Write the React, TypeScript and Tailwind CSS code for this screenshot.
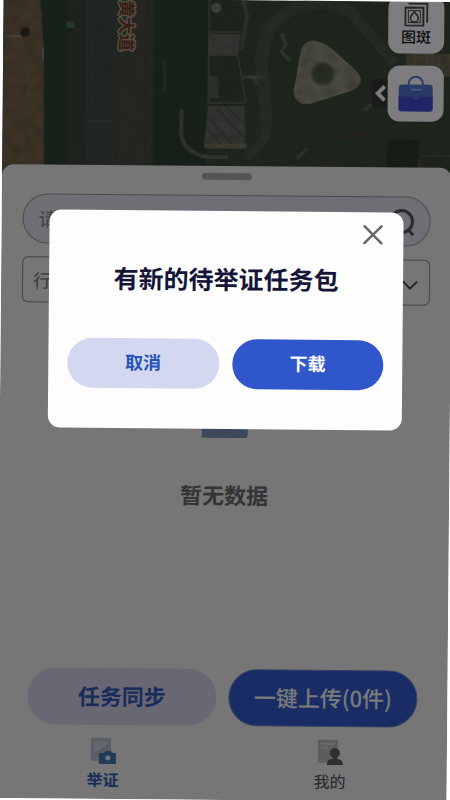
import React from "react";

function SatelliteMap() {
  const patches = [
    [12, 20], [30, 52], [22, 90], [34, 130], [16, 150], [40, 15],
  ];
  return (
    <svg className="block h-[182px] w-full" viewBox="0 0 450 182" preserveAspectRatio="xMidYMid slice" role="img" aria-label="卫星地图">
      <defs>
        <filter id="terrain" x="0" y="0" width="100%" height="100%" colorInterpolationFilters="sRGB">
          <feTurbulence type="fractalNoise" baseFrequency="0.09" numOctaves="4" seed="8" />
          <feColorMatrix values="0 0 0 0 0.2  0 0 0 0 0.25  0 0 0 0 0.18  1.8 0 0 0 -0.6" />
        </filter>
        <filter id="soften" colorInterpolationFilters="sRGB"><feGaussianBlur stdDeviation="0.7" /></filter>
      </defs>
      <rect width="450" height="182" fill="#3b4b3b" />
      <g filter="url(#soften)">
        <path d="M0 0H36L41 50L42 182H0Z" fill="#7a654d" />
        {patches.map(([x, y]) => <circle key={x + y} cx={x} cy={y} r="4" fill="#735f49" />)}
        <circle cx="22" cy="34" r="5" fill="#37342c" />
        <path d="M3 38H18M40 50V60" stroke="#8f8470" strokeWidth="2" />
        <path d="M38 0H68V182H42L41 50Z" fill="#2f4334" />
        <rect x="66" width="17" height="182" fill="#3e453b" />
        <rect x="83" width="32" height="182" fill="#434a48" />
        <path d="M84 0V182M90 0V182" stroke="#4c584b" />
        <path d="M114 0V182" stroke="#3f5236" strokeWidth="2" />
        <rect x="116" width="26" height="182" fill="#4d4d46" />
        <path d="M140 0V182M148 0V182" stroke="#544b3e" strokeWidth="2" />
        <rect x="143" width="4" height="182" fill="#484a41" />
        <rect x="151" width="53" height="182" fill="#2e4133" />
        <path d="M162 60V92" stroke="#3d5233" strokeWidth="4" />
        <path d="M63 26H71" stroke="#547866" strokeWidth="6" />
        <path d="M82 122H110" stroke="#565d52" strokeWidth="2" />
        <path d="M179 110V136Q183 153 204 157H226" fill="none" stroke="#62665b" strokeWidth="4" />
        <path d="M204 0H244L235 54L244 102L244 148H205Z" fill="#3a4938" />
        <g fill="#666963">
          <path d="M206 34H238L235 54H206Z" />
          <path d="M206 106H242L243 144H202Z" />
        </g>
        <path d="M240 0L244 16L238 50" fill="none" stroke="#5f6157" strokeWidth="4" />
        <path d="M206 0V56V104M235 56L243 102M206 32H238M206 55H235M207 103H243" fill="none" stroke="#7a7d73" />
        <path d="M202 146H244" stroke="#7d7a64" strokeWidth="5" />
        <circle cx="213" cy="8" r="5" fill="#858780" />
        <path d="M206 76H216V98H206Z" fill="#5c6256" />
        <path d="M206 118L230 144M206 130L218 144M214 108L241 136M225 107L242 124" stroke="#555852" strokeWidth="2" />
        <path d="M243 157C265 144 265 130 263 104C258 65 254 42 273 19C295 -1 329 -4 350 12L392 62" fill="none" stroke="#4b554b" strokeWidth="9" />
        <path d="M248 157C270 142 270 130 268 104C263 65 259 45 278 22C297 5 329 2 348 18L388 64M240 148C256 140 259 128 258 104C251 65 249 40 268 16" fill="none" stroke="#586253" />
        <path d="M278 33L283 44L278 51L287 60" fill="none" stroke="#6a6b5e" strokeWidth="3" />
        <path d="M238 77H262M252 77V83H256" stroke="#6a6c5f" strokeWidth="3" fill="none" />
        <path d="M313 41C304 39 299 45 298 52L292 88C290 100 298 105 309 102L346 90C359 86 361 77 351 68L327 47C321 43 318 42 313 41Z" fill="#96937f" stroke="#a5a290" />
        <path d="M312 48C307 47 305 50 304 54L298 88C297 95 300 97 307 96" fill="none" stroke="#858472" />
        <circle cx="320" cy="73" r="11" fill="#525b4b" stroke="#717464" strokeWidth="2" />
        <path d="M403 52H450V75H403Z" fill="#706a52" />
        <path d="M412 52V75M424 52V75M436 52V75" stroke="#858068" />
        <rect x="385" y="138" width="32" height="44" fill="#2f392f" />
        <path d="M417 172V159Q417 154 422 154H450" fill="#3e4637" stroke="#5e6657" />
        <path d="M362 109L370 102M295 158L305 148" stroke="#62695a" strokeWidth="3" />
        <path d="M330 140C345 130 365 138 381 128M310 168L330 160" stroke="#454739" strokeWidth="6" fill="none" />
      </g>
      <rect width="450" height="182" filter="url(#terrain)" opacity="0.3" />
      <text transform="translate(117 1) rotate(90)" fontSize="17" fontWeight="700" fill="#6e3a28" stroke="#a99e8b" strokeWidth="3" paintOrder="stroke" strokeLinejoin="round">黄大道</text>
    </svg>
  );
}

function PlotIcon() {
  return (
    <svg className="h-6 w-6" viewBox="0 0 24 24" fill="none" stroke="#4a4a50" strokeWidth="2" aria-hidden="true">
      <path d="M1 5H19V23H1ZM4 1H23V20" />
      <rect x="4" y="8" width="12" height="12" strokeWidth="1" />
      <path d="M10 9C8 12 6 13 6 15.500A4 4 0 0 0 14 15.500C14 13 12 12 10 9Z" strokeWidth="1.600" />
    </svg>
  );
}

function BagIcon() {
  return (
    <svg className="h-9 w-9" viewBox="0 0 36 36" fill="none" aria-hidden="true">
      <path d="M11 11V8A7 7 0 0 1 25 8V11" stroke="#5579d0" strokeWidth="2" />
      <rect x="1" y="9" width="34" height="27" rx="3" fill="#5075cf" />
      <path d="M1 21H35V33Q35 36 32 36H4Q1 36 1 33Z" fill="#434bd0" />
      <path d="M13 14H24" stroke="#a3b9ed" strokeWidth="1.500" />
      <path d="M14 21H22L18 25Z" fill="#5075cf" />
    </svg>
  );
}

function EvidenceIcon() {
  return (
    <svg className="h-7 w-7" viewBox="0 0 28 28" aria-hidden="true">
      <rect x="2" y="1" width="20" height="23" fill="#b5bfc9" />
      <path d="M5 4H19V15L14 11L5 17Z" fill="#c8d1d9" />
      <path d="M5 17L13 11L19 7V15L10 20Z" fill="#abb8c4" />
      <path d="M10 16H15L17 14H22L24 16H27V27H10Z" fill="#4675a8" />
      <circle cx="19" cy="21" r="2.500" fill="#e0ebf5" />
    </svg>
  );
}

function ProfileIcon() {
  return (
    <svg className="h-7 w-7" viewBox="0 0 28 28" aria-hidden="true">
      <rect x="2" y="1" width="20" height="23" fill="#bababa" />
      <path d="M5 5H19M5 9H12" stroke="#d4d4d4" strokeWidth="2" />
      <circle cx="19" cy="14" r="5" fill="#606060" />
      <path d="M17 17H21V20Q27 20 27 26H11Q11 20 17 20Z" fill="#606060" />
    </svg>
  );
}

export default function App() {
  return (
    <div className="min-h-screen overflow-hidden bg-white font-['Noto_Sans_CJK_SC',sans-serif]">
      <main className="relative flex min-h-screen rotate-[0.5deg] flex-col overflow-hidden bg-[#ececec]">
        <SatelliteMap />
        <aside className="absolute right-[9px] top-[-6px] flex flex-col items-end gap-3 text-[#151518]">
          <button className="flex h-[58px] w-14 flex-col items-center justify-end rounded-xl bg-[#fbfbff] pb-[7px] text-[15px] leading-5 font-medium">
            <PlotIcon />图斑
          </button>
          <div className="flex items-center">
            <button aria-label="展开" className="flex h-7 w-4 items-center justify-center rounded-l bg-[#303630]">
              <svg className="h-5 w-3" viewBox="0 0 12 20" fill="none" stroke="#f7f7f7" strokeWidth="4"><path d="M11 3L4 10L11 17" /></svg>
            </button>
            <button aria-label="任务包" className="flex h-14 w-14 items-center justify-center rounded-xl bg-[#fbfbff]"><BagIcon /></button>
          </div>
        </aside>

        <section className="relative -mt-4 flex flex-1 flex-col rounded-t-xl bg-[#ececec]">
          <div className="mx-auto mt-[7px] h-[7px] w-[50px] rounded-full bg-[#aaa]" />
          <div className="mx-[21px] mt-[15px] flex h-[50px] items-center rounded-full border border-[#96969c] bg-[#dfdde8] px-[15px]">
            <input aria-label="搜索" placeholder="请输入" className="min-w-0 flex-1 bg-transparent text-[19px] outline-none placeholder:text-[#858585]" />
            <button aria-label="搜索">
              <svg className="h-7 w-7" viewBox="0 0 28 28" fill="none" stroke="#55555a" strokeWidth="3" strokeLinecap="round"><circle cx="15" cy="14" r="11" /><path d="M22 22L26 27" /></svg>
            </button>
          </div>
          <div className="relative mx-[21px] mt-[13px]">
            <select aria-label="行政区" className="h-[46px] w-full appearance-none rounded-md border border-[#8b8b8b] bg-transparent px-[10px] text-[18px] text-[#747474]">
              <option>行政区</option>
            </select>
            <svg className="pointer-events-none absolute right-[11px] top-5 h-3 w-[18px]" viewBox="0 0 18 12" fill="none" stroke="#4b4b4b" strokeWidth="2"><path d="M2 2L9 9L16 2" /></svg>
          </div>
          <div className="mt-[52px] flex flex-col items-center">
            <svg className="h-[82px] w-[70px]" viewBox="0 0 70 82" aria-hidden="true">
              <path d="M16 0H54V60H16Z" fill="#cbd8e6" />
              <path d="M12 35H58V78Q58 82 54 82H12Z" fill="#7893b5" />
            </svg>
            <p className="mt-10 text-[22px] leading-8 font-bold text-[#686868]">暂无数据</p>
          </div>
          <div className="mt-auto grid grid-cols-2 gap-3 px-[30px]">
            <button className="h-[57px] rounded-full bg-[#d3d1e5] pb-1 text-[22px] leading-8 font-bold text-[#3159b8]">任务同步</button>
            <button className="h-[57px] rounded-full border border-[#6f84c4] bg-[#3259cc] pb-1 text-[22px] leading-8 font-medium text-[#f4f4f4]">一键上传(0件)</button>
          </div>
          <nav className="mt-3 mb-2 flex justify-between pr-[85px] pl-[74px] text-[16px] leading-6">
            <button className="flex w-16 flex-col items-center gap-0.5 font-bold text-[#2f57b8]"><EvidenceIcon />举证</button>
            <button className="flex w-16 flex-col items-center gap-0.5 text-[#484848]"><ProfileIcon />我的</button>
          </nav>
        </section>

        <div className="absolute inset-0 bg-black/50 px-12 pt-[211px]">
          <section role="dialog" aria-modal="true" aria-labelledby="dialog-title" className="flex flex-col rounded-xl bg-[#fdfdfe] px-[19px] pb-10">
            <button aria-label="关闭" className="mt-3 self-end">
              <svg className="h-[22px] w-[22px]" viewBox="0 0 22 22" fill="none" stroke="#68686a" strokeWidth="2.500" strokeLinecap="round"><path d="M2 2L19 19M19 2L2 19" /></svg>
            </button>
            <h1 id="dialog-title" className="mt-[15px] text-center text-[25px] leading-9 font-bold text-[#151537]">有新的待举证任务包</h1>
            <div className="mt-[43px] grid grid-cols-2 gap-[13px]">
              <button className="h-[50px] rounded-full bg-[#d3d7f0] pb-1 text-[18px] leading-6 font-bold text-[#2452b8]">取消</button>
              <button className="h-[50px] rounded-full bg-[#3056cc] pb-1 text-[18px] leading-6 font-bold text-white">下载</button>
            </div>
          </section>
        </div>
      </main>
    </div>
  );
}
